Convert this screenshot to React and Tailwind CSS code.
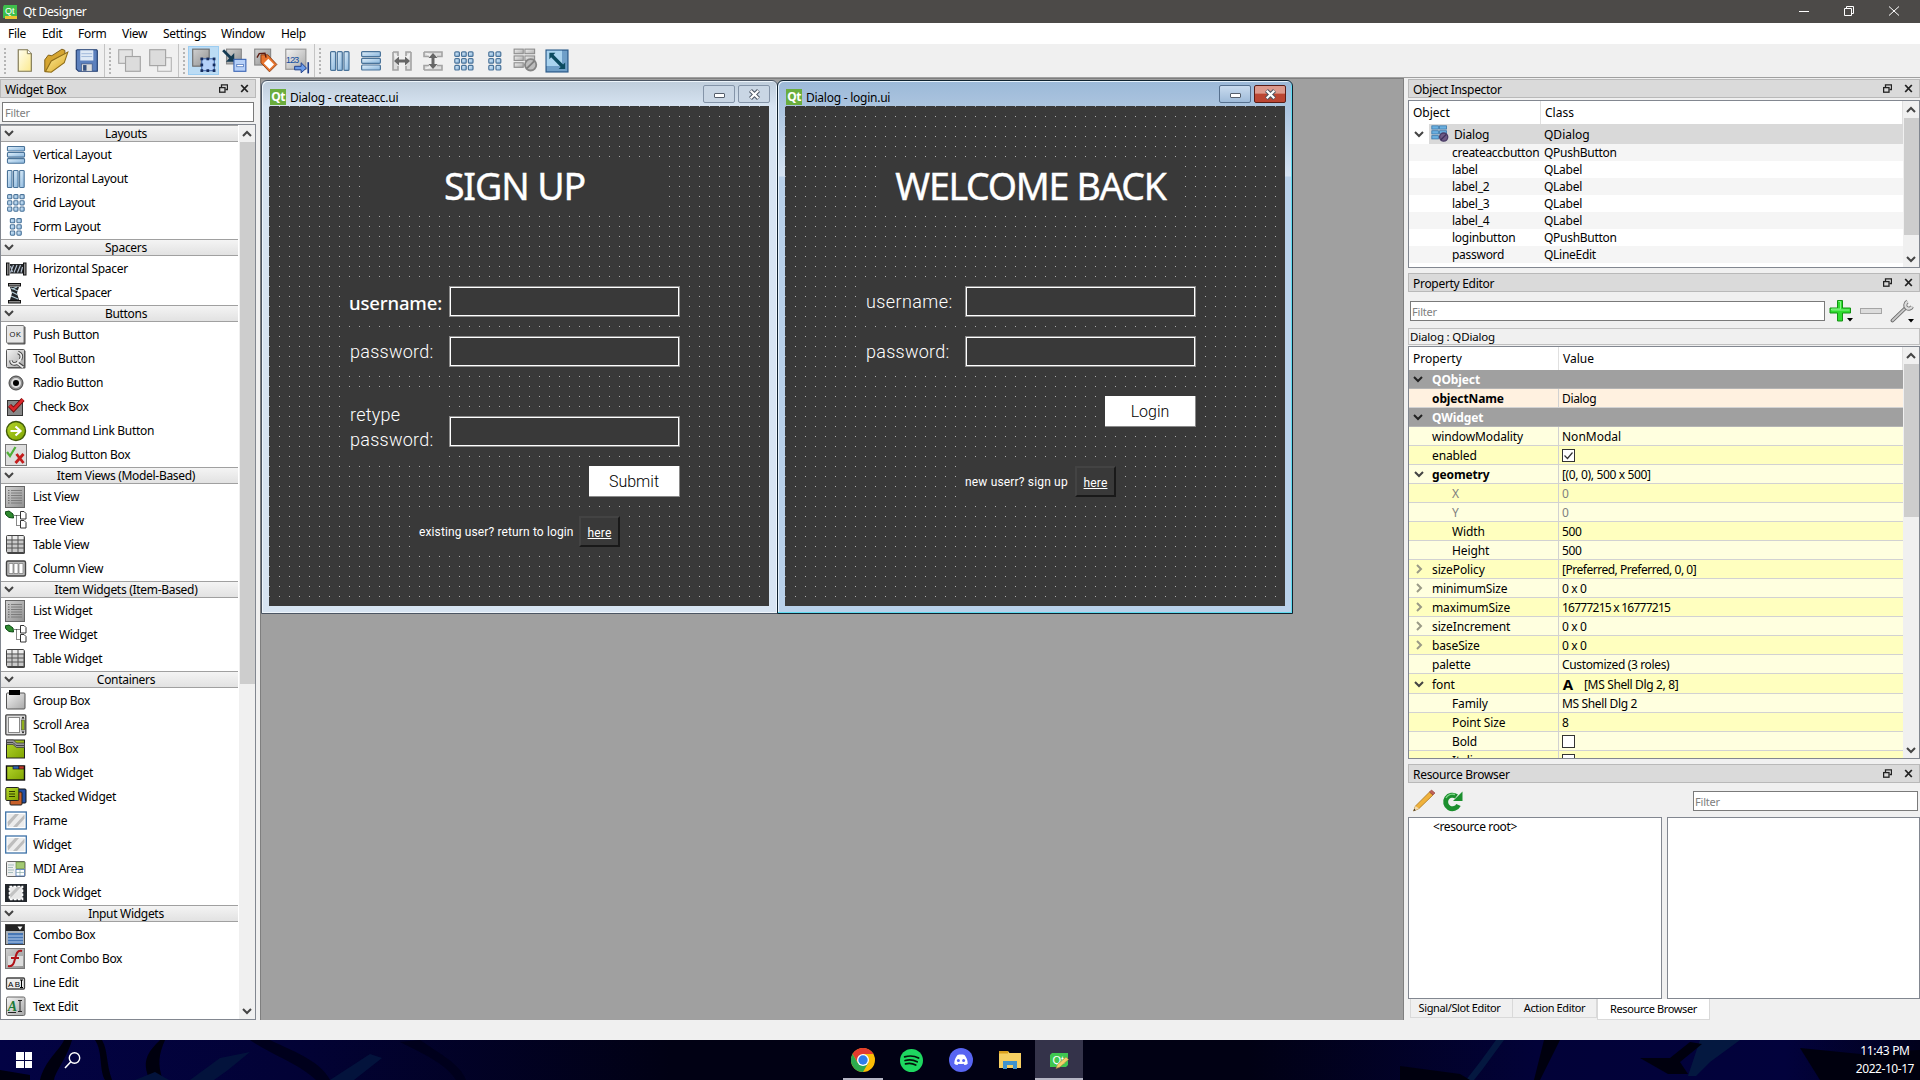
import React from "react";

/* ---------- shared gradients ---------- */
function Defs() {
  return (
    <svg width="0" height="0" className="absolute">
      <defs>
        <linearGradient id="blue" x1="0" y1="0" x2="1" y2="1">
          <stop offset="0" stopColor="#e3f1fb" />
          <stop offset="1" stopColor="#86b4dc" />
        </linearGradient>
        <linearGradient id="grey" x1="0" y1="0" x2="1" y2="1">
          <stop offset="0" stopColor="#f4f4f4" />
          <stop offset="1" stopColor="#a8a8a8" />
        </linearGradient>
        <linearGradient id="dark" x1="0" y1="0" x2="1" y2="1">
          <stop offset="0" stopColor="#d0d0d0" />
          <stop offset="1" stopColor="#909090" />
        </linearGradient>
        <linearGradient id="green" x1="0" y1="0" x2="1" y2="1">
          <stop offset="0" stopColor="#b4d52c" />
          <stop offset="1" stopColor="#7fa400" />
        </linearGradient>
        <linearGradient id="gold" x1="0" y1="0" x2="1" y2="1">
          <stop offset="0" stopColor="#fff0a0" />
          <stop offset="1" stopColor="#d9a420" />
        </linearGradient>
        <linearGradient id="paper" x1="0" y1="0" x2="1" y2="1">
          <stop offset="0" stopColor="#fffef0" />
          <stop offset="1" stopColor="#fbe98c" />
        </linearGradient>
      </defs>
    </svg>
  );
}

const Svg = ({ s = 22, children }) => (
  <svg width={s} height={s} viewBox="0 0 22 22" className="block shrink-0">
    {children}
  </svg>
);

/* ---------- layout icons ---------- */
const B = { fill: "url(#blue)", stroke: "#4a7399", strokeWidth: 1.2 };
const G = { fill: "url(#grey)", stroke: "#8f8f8f", strokeWidth: 1 };

const VBars = ({ s }) => (
  <Svg s={s}>{[1.6, 8.3, 15].map((y) => <rect key={y} x="1.6" y={y} width="18.8" height="5" rx="1" {...B} />)}</Svg>
);
const HBars = ({ s }) => (
  <Svg s={s}>{[1.6, 8.3, 15].map((x) => <rect key={x} x={x} y="1.6" width="5" height="18.8" rx="1" {...B} />)}</Svg>
);
const GridI = ({ s }) => (
  <Svg s={s}>
    {[1.8, 8.6, 15.4].map((y) => [1.8, 8.6, 15.4].map((x) => <rect key={x + "-" + y} x={x} y={y} width="4.6" height="4.6" rx="1" {...B} />))}
  </Svg>
);
const FormI = ({ s }) => (
  <Svg s={s}>
    {[1.8, 8.6, 15.4].map((y) => [4.8, 12].map((x) => <rect key={x + "-" + y} x={x} y={y} width="4.8" height="4.6" rx="1" {...B} />))}
  </Svg>
);
const HSplit = ({ s }) => (
  <Svg s={s}>
    <path d="M2 2h5v4M2 2v18h5v-4M20 2h-5v4M20 2v18h-5v-4" fill="#ddd" stroke="#a3a3a3" strokeWidth="1.600" />
    <path d="M3 11l5-4.500V9.500h6V6.500l5 4.500-5 4.500v-3H8v3z" fill="#666" />
  </Svg>
);
const VSplit = ({ s }) => (
  <Svg s={s}>
    <path d="M2 2v4.500h5M2 2h18v4.500h-5M2 20v-4.500h5M2 20h18v-4.500h-5" fill="#ddd" stroke="#a3a3a3" strokeWidth="1.600" />
    <path d="M11 3l4.500 5h-3v6h3L11 19l-4.500-5h3V8h-3z" fill="#666" />
  </Svg>
);
const BreakI = ({ s, blue }) => {
  const P = blue ? { fill: "#6bb0e0", stroke: "#3877ab", strokeWidth: 1 } : G;
  return (
    <Svg s={s}>
      <rect x="1" y="1" width="8" height="4" {...P} />
      <rect x="10.500" y="1" width="8.500" height="4" {...P} />
      <rect x="1" y="7" width="8" height="4" {...P} />
      <rect x="10.500" y="7" width="8.500" height="4" {...P} />
      <rect x="1" y="13" width="8" height="4" {...P} />
      <circle cx="15.500" cy="14.800" r="5" fill={blue ? "#6d5a85" : "#bdbdbd"} stroke={blue ? "#4a3c66" : "#858585"} strokeWidth="1.600" />
      <path d="M12.200 18l6.500-6.500" stroke={blue ? "#3b2f5a" : "#7e7e7e"} strokeWidth="1.600" />
    </Svg>
  );
};
const Adjust = ({ s }) => (
  <Svg s={s}>
    <rect x="1" y="1" width="20" height="20" fill="#6f9fc8" stroke="#2f5f8e" strokeWidth="1.200" />
    <rect x="1.600" y="1.600" width="14" height="14" fill="#a9d3ef" />
    <path d="M4 3.500h5.500L7.800 5.300l8.800 8.800 1.900-1.800v6h-6l1.900-1.900-8.800-8.800L4 9.300z" fill="#0b4a60" />
  </Svg>
);

/* ---------- toolbar icons ---------- */
const NewI = () => (
  <Svg s={25}>
    <path d="M5.500 1.500h8l3.500 3.500v15.500H5.500z" fill="url(#paper)" stroke="#7d7550" />
    <path d="M13.500 1.500V5H17" fill="#fff" stroke="#7d7550" strokeWidth=".8" />
  </Svg>
);
const OpenI = () => (
  <Svg s={26}>
    <path d="M1.500 20V10l3-4 3 .5L16 1l2.500 1v5L5 20z" fill="#d5a531" stroke="#7c5c14" strokeWidth=".8" />
    <path d="M2 20L7 11l14-7.500-3 9L7 20.500z" fill="url(#gold)" stroke="#8e6c18" strokeWidth=".9" />
  </Svg>
);
const SaveI = () => (
  <Svg s={25}>
    <path d="M3 1.500h17l.5 1v18H4l-2-2V2z" fill="#5c80bd" stroke="#203c70" />
    <rect x="5.500" y="2" width="11.500" height="9" fill="#dfe9f6" />
    <path d="M6.500 5h9.500M6.500 7.500h9.500" stroke="#9db5d8" strokeWidth=".8" />
    <rect x="6.500" y="14" width="9.500" height="6.500" fill="#dcdcdc" stroke="#3e5684" strokeWidth=".6" />
    <rect x="8" y="15" width="3" height="5" fill="#35507f" />
  </Svg>
);
const BackI = () => (
  <Svg s={25}>
    <rect x="1.500" y="1.500" width="12" height="12" fill="#e3e3e3" stroke="#a9a9a9" />
    <rect x="7.500" y="7.500" width="13" height="13" fill="#dcdcdc" stroke="#a4a4a4" />
  </Svg>
);
const FrontI = () => (
  <Svg s={25}>
    <rect x="8.500" y="8.500" width="12" height="12" fill="#f0f0f0" stroke="#b5b5b5" />
    <rect x="1.500" y="1.500" width="14" height="14" fill="#dcdcdc" stroke="#a4a4a4" />
  </Svg>
);
const EditW = () => (
  <Svg s={25}>
    <rect x="1.500" y="1" width="14.500" height="15" fill="url(#dark)" stroke="#6c6c6c" />
    <rect x="9.500" y="9.500" width="11" height="10.500" fill="#b5d0f8" stroke="#3b62a8" strokeWidth=".9" />
    {[[8.700, 8.700], [14, 8.700], [19.500, 8.700], [8.700, 14], [19.500, 14], [8.700, 19], [14, 19], [19.500, 19]].map(([x, y]) => (
      <rect key={x + "," + y} x={x - 0.400} y={y - 0.300} width="2.400" height="2.400" fill="#142a5c" />
    ))}
  </Svg>
);
const SigI = () => (
  <Svg s={25}>
    <rect x="4" y="1" width="13" height="13" fill="url(#dark)" stroke="#888" />
    <path d="M1 2l7 7" stroke="#143a52" strokeWidth="2.400" />
    <path d="M10.800 12V4.500L3.500 12z" fill="#143a52" />
    <rect x="10.500" y="10" width="10.500" height="10.500" fill="#b6d0f8" stroke="#3c66b4" />
    <rect x="13" y="14.500" width="6" height="2" fill="#fff" stroke="#3c66b4" strokeWidth=".6" />
  </Svg>
);
const BuddyI = () => (
  <Svg s={25}>
    <rect x="1.500" y="1" width="14" height="14" fill="url(#dark)" stroke="#888" />
    <path d="M7 6h6l8 8.500-6.500 6.500L7 13z" fill="#e8742e" stroke="#8a3c10" strokeWidth=".8" />
    <path d="M13.500 9.500l5 5-4 4-5-5z" fill="#fff" />
    <path d="M3.500 8.500l2-3.500 5-.5 1 4" fill="none" stroke="#5c1a10" strokeWidth="1.200" />
  </Svg>
);
const TabI = () => (
  <Svg s={26}>
    <rect x="1.500" y="1" width="17" height="17" fill="url(#grey)" stroke="#999" />
    <text x="1.500" y="13" fontSize="8" textLength="11.500" fill="#174f9e" fontFamily="Liberation Sans, sans-serif">123</text>
    <path d="M9 15.500h5.500V12.500l4.500 4.500-4.500 4V18.500H9z" fill="#6b9be8" stroke="#1d3c88" strokeWidth=".8" />
    <path d="M20.500 12v9.500" stroke="#1d3c88" strokeWidth="1.400" />
  </Svg>
);

/* ---------- widget box icons ---------- */
const HSpacer = () => (
  <Svg>
    <rect x="1.500" y="5" width="2.500" height="12" fill="#888" stroke="#111" />
    <rect x="18.500" y="5" width="2.500" height="12" fill="#888" stroke="#111" />
    <path d="M5 6h13v9.500H5z" fill="#232629" />
    <path d="M5.500 14.500L8.500 7M9 14.500L12 7M12.500 14.500L15.500 7M5.500 8l2 6M16 14.500L17.500 9" stroke="#b9c6d6" strokeWidth="1.100" />
  </Svg>
);
const VSpacer = () => (
  <Svg>
    <rect x="3.500" y="1.500" width="12" height="2.500" fill="#888" stroke="#111" />
    <rect x="3.500" y="18.500" width="12" height="2.500" fill="#888" stroke="#111" />
    <path d="M5 5h9l-2 6 2 7H5l2-7z" fill="#232629" />
    <path d="M6 6l7 3M7 10l6 3M6 14l7 3M12 5l-5 2" stroke="#b3cdd8" strokeWidth="1.100" />
  </Svg>
);
const PushI = () => (
  <Svg>
    <rect x="2.500" y="2.500" width="18" height="18" rx="1" fill="#555" />
    <rect x="1.500" y="1.500" width="17.500" height="17.500" rx="1" fill="#e6e6e6" stroke="#777" />
    <text x="4.500" y="13" fontSize="7.500" textLength="11.500" fill="#111" fontFamily="Liberation Sans, sans-serif">OK</text>
  </Svg>
);
const ToolI = () => (
  <Svg>
    <rect x="2.500" y="2.500" width="18" height="18" rx="1" fill="#555" />
    <rect x="1.500" y="1.500" width="18" height="18" rx="1" fill="url(#grey)" stroke="#555" />
    <path d="M6 12.500c0 3 3 4.500 6 2.500l6 4M13 4.500c3 1 4.500 3.500 2.500 7" fill="none" stroke="#444" strokeWidth="3.600" />
    <path d="M6 12.500c0 3 3 4.500 6 2.500l6 4.500M13 4.500c3 1 4.500 3.500 2.500 7l-3 3" fill="none" stroke="#ececec" strokeWidth="1.800" />
  </Svg>
);
const RadioI = () => (
  <Svg>
    <circle cx="11" cy="11" r="7" fill="#8d8d8d" stroke="#444" />
    <circle cx="11" cy="11" r="5" fill="#ddd" />
    <circle cx="11" cy="11" r="3" fill="#000" />
  </Svg>
);
const CheckI = () => (
  <Svg>
    <rect x="2.500" y="4.500" width="15" height="15" fill="#888" stroke="#333" />
    <path d="M4.500 9.500l4 4L18 3.500" fill="none" stroke="#6b0b0b" strokeWidth="4.400" />
    <path d="M4.500 9.500l4 4L18 3.500" fill="none" stroke="#d8262a" strokeWidth="2.800" />
  </Svg>
);
const CmdI = () => (
  <Svg>
    <circle cx="11" cy="11" r="9.500" fill="url(#green)" stroke="#3f5a08" strokeWidth="1.400" />
    <path d="M5.500 11h9M10.500 6.500l5 4.500-5 4.500" fill="none" stroke="#fff" strokeWidth="2.200" />
  </Svg>
);
const DlgBtnI = () => (
  <Svg>
    <rect x=".5" y=".5" width="21" height="21" fill="#dedede" stroke="#777" />
    <path d="M2 8l3 4 5.500-9" fill="none" stroke="#4fae36" strokeWidth="2.200" />
    <path d="M11.500 10l7 9M18.500 10l-8 9" stroke="#c41d1d" strokeWidth="2.800" />
  </Svg>
);
const ListI = () => (
  <Svg>
    <rect x=".5" y=".5" width="19" height="21" fill="url(#dark)" stroke="#666" />
    <path d="M6 4.500h11M6 7h11M6 9.500h11M6 12h11M6 14.500h11M6 17h11" stroke="#6e6e6e" strokeWidth=".8" />
    <path d="M3 4.500h1.500M3 7h1.500M3 9.500h1.500M3 12h1.500M3 14.500h1.500M3 17h1.500" stroke="#555" strokeWidth=".8" />
  </Svg>
);
const TreeI = () => (
  <Svg>
    <path d="M0 2l4-1 4 3 .5 4L4 7.500 1 5z" fill="#2f8a2f" stroke="#0b4a12" />
    <path d="M9.500 5.500h5M11.500 5.500v10h3" fill="none" stroke="#111" strokeDasharray="1 1" />
    <path d="M15.500 1.500h3.500l2 2V9h-5.500zM15.500 10.500h3.500l2 2V18h-5.500z" fill="#fff" stroke="#333" />
  </Svg>
);
const TableI = () => (
  <Svg>
    <rect x="2" y="2" width="18" height="18" rx="1.500" fill="#444" />
    <rect x="1.500" y="1.500" width="17.500" height="17" rx="1" fill="#c9c9c9" stroke="#444" />
    <rect x="2" y="2" width="16.500" height="3.500" fill="#eee" />
    <path d="M2 6h17M2 10h17M2 14h17M7 2v16M13 2v16" stroke="#555" />
  </Svg>
);
const ColumnI = () => (
  <Svg>
    <rect x="1.500" y="3" width="19" height="15" rx="1.500" fill="#bbb" stroke="#444" strokeWidth="1.400" />
    <path d="M4 5.500h4v10H4zM9 5.500h4v10H9zM14 5.500h4v10h-4z" fill="#fff" stroke="#777" strokeWidth=".7" />
  </Svg>
);
const GroupI = () => (
  <Svg>
    <rect x="1.500" y="3" width="18.500" height="16" rx="1" fill="url(#grey)" stroke="#555" />
    <rect x="4" y="0" width="11" height="5" fill="#000" />
  </Svg>
);
const ScrollI = () => (
  <Svg>
    <rect x=".8" y=".8" width="20" height="20" rx="1" fill="#ddd" stroke="#444" strokeWidth="1.300" />
    <rect x="3.500" y="3.500" width="11" height="15" fill="#fff" stroke="#888" />
    <rect x="16.500" y="6" width="3" height="10" fill="#8fae1c" stroke="#444" strokeWidth=".6" />
    <path d="M18 2.500l1.500 2h-3zM18 19.500l1.500-2h-3z" fill="#000" />
  </Svg>
);
const ToolBoxI = () => (
  <Svg>
    <rect x="1.500" y="2" width="18" height="18" fill="url(#green)" stroke="#222" />
    <path d="M1.500 2h7l3 3h8v4.500h-8L8 6.500H1.500z" fill="#999" stroke="#333" strokeWidth=".7" />
    <path d="M1.500 4.500h6.500l3 3h8.500" fill="none" stroke="#444" strokeWidth="1" />
  </Svg>
);
const TabWI = () => (
  <Svg>
    <rect x="1.500" y="4" width="18" height="14" fill="url(#green)" stroke="#111" strokeWidth="1.400" />
    <rect x="8" y="4" width="6" height="3" fill="#2f62b0" stroke="#111" strokeWidth=".6" />
    <rect x="14" y="4" width="5" height="3" fill="#c0392b" stroke="#111" strokeWidth=".6" />
  </Svg>
);
const StackI = () => (
  <Svg>
    <rect x="10" y="3" width="11" height="14" rx="1" fill="#2450a5" stroke="#111" />
    <rect x="5" y="6" width="12" height="13" rx="1" fill="#c8602a" stroke="#222" />
    <rect x=".8" y="1.500" width="13" height="13" rx="1" fill="url(#green)" stroke="#222" />
    <path d="M4 5.500h6M4 8h6M4 10.500h6" stroke="#2d3a00" />
  </Svg>
);
const FrameI = () => (
  <Svg>
    <rect x=".7" y="2" width="20.600" height="17" fill="#fff" stroke="#3d72a8" strokeWidth="1.300" />
    <rect x="2.500" y="4" width="17" height="13" fill="#ececec" />
    <path d="M2.500 12L10 4h4L3 16.500zM8 17L19.500 4.500v4L12 17z" fill="#bdbdbd" />
  </Svg>
);
const MdiI = () => (
  <Svg>
    <rect x="1.500" y="3.500" width="18.500" height="15" rx="1" fill="#eee" stroke="#666" />
    <rect x="11" y="4" width="8.500" height="6.500" fill="#a3c973" stroke="#5b8030" strokeWidth=".6" />
    <rect x="11" y="11.500" width="8.500" height="6.500" fill="#fff" stroke="#4973b5" strokeWidth=".8" />
    <path d="M3 7h6M3 9.500h5M3 12h6M3 14.500h5M11 14.500h8.500M15 11.500V18" stroke="#8aa" strokeWidth=".7" />
  </Svg>
);
const DockI = () => (
  <Svg>
    <rect x="0" y="2" width="22" height="18" fill="#23272c" />
    <rect x="4.500" y="4.500" width="13" height="13" fill="#e8e8e8" stroke="#fff" strokeDasharray="2.500 1.500" strokeWidth="1.600" />
    <path d="M5 12l7-7h4L5.500 16z" fill="#c2c2c2" />
  </Svg>
);
const ComboI = () => (
  <Svg>
    <rect x=".5" y=".5" width="19" height="20" fill="#a8b0b8" stroke="#444" />
    <rect x="1" y="1" width="18" height="6" fill="#222" />
    <path d="M12.500 2.500h5L15 6z" fill="#fff" />
    <rect x="3" y="9" width="15" height="11" fill="#4777b5" />
    <path d="M3 12h15M3 15h15M3 18h15" stroke="#b9d0ee" />
  </Svg>
);
const FontCI = () => (
  <Svg>
    <rect x=".5" y=".5" width="19" height="20" fill="url(#dark)" stroke="#777" />
    <rect x="3" y="8" width="15" height="10" fill="#dcdcdc" />
    <path d="M17 3c-5-1.500-6 4-7 8s-2 8-7 7M6 10h8" fill="none" stroke="#b01218" strokeWidth="2" />
  </Svg>
);
const LineEI = () => (
  <Svg>
    <rect x="1.500" y="6" width="18" height="11" rx="1" fill="#ededed" stroke="#444" strokeWidth="1.300" />
    <text x="3" y="14.500" fontSize="8" textLength="12" fill="#000" fontFamily="Liberation Sans, sans-serif">AB</text>
    <path d="M16.500 8v7.500M15 8h3M15 15.500h3" stroke="#000" />
  </Svg>
);
const TextEI = () => (
  <Svg>
    <rect x="1.500" y="1" width="18.500" height="18.500" rx="1.500" fill="url(#grey)" stroke="#666" />
    <text x="2.800" y="14.500" fontSize="14" fill="#1d7a38" fontStyle="italic" fontWeight="bold" fontFamily="Liberation Serif, serif">A</text>
    <path d="M3 16.500h8M15 4.500v11M13 4.500h4M13 15.500h4" stroke="#222" />
  </Svg>
);

const GROUPS = [
  ["Layouts", [["Vertical Layout", VBars], ["Horizontal Layout", HBars], ["Grid Layout", GridI], ["Form Layout", FormI]]],
  ["Spacers", [["Horizontal Spacer", HSpacer], ["Vertical Spacer", VSpacer]]],
  ["Buttons", [["Push Button", PushI], ["Tool Button", ToolI], ["Radio Button", RadioI], ["Check Box", CheckI], ["Command Link Button", CmdI], ["Dialog Button Box", DlgBtnI]]],
  ["Item Views (Model-Based)", [["List View", ListI], ["Tree View", TreeI], ["Table View", TableI], ["Column View", ColumnI]]],
  ["Item Widgets (Item-Based)", [["List Widget", ListI], ["Tree Widget", TreeI], ["Table Widget", TableI]]],
  ["Containers", [["Group Box", GroupI], ["Scroll Area", ScrollI], ["Tool Box", ToolBoxI], ["Tab Widget", TabWI], ["Stacked Widget", StackI], ["Frame", FrameI], ["Widget", FrameI], ["MDI Area", MdiI], ["Dock Widget", DockI]]],
  ["Input Widgets", [["Combo Box", ComboI], ["Font Combo Box", FontCI], ["Line Edit", LineEI], ["Text Edit", TextEI]]],
];

const Chevron = ({ dir = "down", color = "#444", w = 2 }) => {
  const d = { down: "M1 3l4 4 4-4", up: "M1 7l4-4 4 4", right: "M3 1l4 4-4 4" }[dir];
  return (
    <svg width="10" height="10" viewBox="0 0 10 10" className="block shrink-0">
      <path d={d} fill="none" stroke={color} strokeWidth={w} />
    </svg>
  );
};

function DockTitle({ children }) {
  return (
    <div className="flex h-[19px] shrink-0 items-center border border-[#b9b9b9] bg-[#dadada] pl-1 pr-[6px]">
      <span className="grow pt-[3px] text-[12px] leading-[16px] tracking-[-0.3px]">{children}</span>
      <svg width="9" height="9" viewBox="0 0 9 9" className="mr-3">
        <path d="M2.500 3V.8h6v4.700H6.500" fill="none" stroke="#222" strokeWidth="1.300" />
        <rect x=".6" y="3.600" width="5.400" height="4.600" fill="none" stroke="#222" strokeWidth="1.300" />
      </svg>
      <svg width="9" height="9" viewBox="0 0 9 9">
        <path d="M1.200 1l6.600 7M7.800 1l-6.600 7" stroke="#222" strokeWidth="1.800" />
      </svg>
    </div>
  );
}

/* The thumb's height is given by its Tailwind class. */
function ScrollBar({ thumb }) {
  return (
    <div className="flex w-[16px] shrink-0 flex-col items-center bg-[#f0f0f0]">
      <div className="flex h-[17px] items-center"><Chevron dir="up" /></div>
      <div className={"w-[15px] bg-[#cdcdcd] " + thumb} />
      <div className="grow" />
      <div className="flex h-[17px] items-center"><Chevron /></div>
    </div>
  );
}

const isLayoutIcon = (Icon) => Icon === VBars || Icon === HBars || Icon === GridI || Icon === FormI;

function WidgetBox() {
  return (
    <div className="flex w-[256px] shrink-0 flex-col pt-px">
      <DockTitle>Widget Box</DockTitle>
      <div className="ml-[2px] mr-[2px] mt-[4px] flex h-[20px] items-center border border-[#7a7a7a] bg-white pl-[2px] text-[11px] tracking-[-0.2px] text-[#808080]">
        <span className="pt-[2px]">Filter</span>
      </div>
      <div className="mt-[2px] flex h-[896px] border border-[#828790] bg-white">
        <div className="flex w-[237px] flex-col">
          {GROUPS.map(([name, items]) => (
            <React.Fragment key={name}>
              <div className="mb-px flex h-[17px] items-center border-y border-[#a0a0a0] bg-linear-to-b from-[#f4f4f4] to-[#e2e2e2] pl-[3px]">
                <div className="-mt-px"><Chevron /></div>
                <span className="grow text-center text-[12px] leading-[14px] tracking-[-0.3px]">{name}</span>
              </div>
              {items.map(([label, Icon]) => (
                <div key={label} className="flex h-[24px] items-center">
                  <div className={isLayoutIcon(Icon) ? "w-[27px] shrink-0 pl-[5px]" : "w-[27px] shrink-0 pl-[4px]"}><Icon s={20} /></div>
                  <span className="ml-[5px] text-[12px] tracking-[-0.3px]">{label}</span>
                </div>
              ))}
            </React.Fragment>
          ))}
        </div>
        <div className="grow" />
        <ScrollBar thumb="h-[542px]" />
      </div>
    </div>
  );
}

/* ---------- toolbar ---------- */
const Handle = () => (
  <div className="flex w-[9px] shrink-0 flex-col items-center gap-[2px]">
    {[0, 1, 2, 3, 4, 5, 6].map((i) => <div key={i} className="h-[2px] w-[2px] bg-[#b5b5b5]" />)}
  </div>
);
const Btn = ({ children, on }) => (
  <div className={"flex h-[29px] w-[31px] shrink-0 items-center justify-center " + (on ? "border border-[#9ccdf2] bg-[#bcdcf4]" : "")}>{children}</div>
);

function ToolBar() {
  return (
    <div className="flex h-[34px] shrink-0 items-center border-b border-[#a0a0a0] bg-[#f0f0f0]">
      <div className="flex h-full w-[105px] items-center border-r border-[#c4c4c4]">
        <Handle />
        <Btn><NewI /></Btn><Btn><OpenI /></Btn><Btn><SaveI /></Btn>
      </div>
      <div className="flex h-full w-[74px] items-center border-r border-[#c4c4c4]">
        <Handle />
        <Btn><BackI /></Btn><Btn><FrontI /></Btn>
      </div>
      <div className="flex h-full w-[136px] items-center border-r border-[#c4c4c4]">
        <Handle />
        <Btn on><EditW /></Btn><Btn><SigI /></Btn><Btn><BuddyI /></Btn><Btn><TabI /></Btn>
      </div>
      <div className="flex items-center">
        <Handle />
        <Btn><HBars s={22} /></Btn><Btn><VBars s={22} /></Btn><Btn><HSplit s={22} /></Btn><Btn><VSplit s={22} /></Btn>
        <Btn><GridI s={22} /></Btn><Btn><FormI s={22} /></Btn><Btn><BreakI s={25} /></Btn><Btn><Adjust s={24} /></Btn>
      </div>
    </div>
  );
}

/* ---------- MDI windows ---------- */
const QtBadge = () => (
  <div className="flex h-4 w-4 shrink-0 items-center justify-center bg-[#6aad3d] text-[12px] leading-none font-bold tracking-[-0.5px] text-white">Qt</div>
);

function FormWindow({ title, active, place, children }) {
  return (
    <div
      className={
        "absolute top-[1px] h-[534px] rounded-t-[6px] border px-[7px] " + place +
        (active
          ? " border-[#10222f] bg-[#b9d1ea] bg-linear-to-b from-[#9cb9d8] from-0% via-[#d5e3f2] via-[95px] to-[#b9d1ea] to-[96px] shadow-[inset_-1px_-1px_0_#5fdcf0,inset_1px_1px_0_#e6f2fc]"
          : " border-[#4b5563] bg-[#d7e4f2] bg-linear-to-b from-[#bfcddb] from-0% to-[#d7e4f2] to-[26px] shadow-[inset_-1px_-1px_0_#eef5fb,inset_1px_1px_0_#eef5fb]")
      }
    >
      <div className="flex h-[25px] w-[501px] items-start">
        <div className="ml-px mt-[8px]"><QtBadge /></div>
        <span className="ml-[4px] mt-[9px] grow text-[12px] leading-[16px] tracking-[-0.25px]">{title}</span>
        <div className={"mt-[4px] mr-[3px] flex h-[18px] w-[32px] items-center justify-center rounded-[2px] border " + (active ? "border-[#56708e] bg-linear-to-b from-[#c9dbee] to-[#9fbbd9]" : "border-[#8494a8] bg-[#c9d6e4]")}>
          <div className="mt-[3px] h-[5px] w-[11px] rounded-[1px] border border-[#555e6b] bg-white" />
        </div>
        <div className={"mt-[4px] flex h-[18px] w-[32px] items-center justify-center rounded-[2px] border " + (active ? "border-[#5a1d16] bg-linear-to-b from-[#dd9a8d] from-45% to-[#bb4633] to-50%" : "border-[#8494a8] bg-[#c9d6e4]")}>
          <svg width="13" height="11" viewBox="0 0 13 11">
            <path d="M2.500 1.500l8 8M10.500 1.500l-8 8" stroke="#4d5663" strokeWidth="4.200" />
            <path d="M2.700 1.700l7.600 7.600M10.300 1.700l-7.600 7.600" stroke="#fff" strokeWidth="2.200" />
          </svg>
        </div>
      </div>
      <div className="relative h-[500px] w-[500px] overflow-hidden bg-[#393939] bg-[linear-gradient(90deg,transparent_1px,#393939_1px),linear-gradient(180deg,#a9a9a9_1px,transparent_1px)] bg-[size:10px_10px]">
        {children}
      </div>
    </div>
  );
}

const Cover = ({ at }) => <div className={"absolute bg-[#393939] " + at} />;
const Field = ({ at }) => <div className={"absolute left-[180px] h-[31px] w-[231px] border border-[#8c8c8c] bg-[#393939] p-0 " + at}><div className="h-full w-full border border-white" /></div>;
const thin = "absolute font-['Roboto',sans-serif] text-[18px] leading-[25px] font-light text-white ";
const heading = "absolute left-[91px] top-[55px] w-[309px] text-center text-[37.5px] leading-[50px] text-white [-webkit-text-stroke:0.4px_white] ";
const Here = ({ at }) => (
  <div className={"absolute flex h-[31px] w-[41px] items-center justify-center border-2 border-t-[#434343] border-l-[#434343] border-r-[#191919] border-b-[#191919] bg-[#393939] pt-[2px] font-['Roboto',sans-serif] text-[12px] text-white underline underline-offset-1 tracking-[0.15px] " + at}>here</div>
);
const WhiteBtn = ({ at, children }) => (
  <div className={"absolute flex h-[31px] w-[91px] items-center justify-center border-r border-b border-[#8a8a8a] bg-white pt-[2px] font-['Roboto',sans-serif] text-[16px] font-light text-black " + at}>{children}</div>
);

function Mdi() {
  return (
    <div className="relative ml-[4px] w-[1144px] shrink-0 overflow-hidden border-t border-r border-l border-[#7f7f7f] bg-[#a0a0a0]">
      <FormWindow title="Dialog - createacc.ui" place="left-0 w-[517px]">
        <Cover at="left-[92px] top-[56px] h-[50px] w-[304px]" />
        <Cover at="left-[75px] top-[175px] h-[40px] w-[340px]" />
        <Cover at="left-[75px] top-[226px] h-[40px] w-[340px]" />
        <Cover at="left-[75px] top-[285px] h-[71px] w-[104px]" />
        <Cover at="left-[180px] top-[305px] h-[41px] w-[235px]" />
        <Cover at="left-[146px] top-[405px] h-[40px] w-[209px]" />
        <Cover at="left-[0px] top-[495px] h-[5px] w-[500px]" />
        <div className={heading + "tracking-[-1.1px]"}>SIGN UP</div>
        <div className="absolute left-[80px] top-[184px] text-[18.500px] leading-[26px] font-medium tracking-[-0.150px] text-white">username:</div>
        <div className={thin + "left-[81px] top-[233px] tracking-[0.250px]"}>password:</div>
        <div className={thin + "left-[81px] top-[296px] w-[90px] tracking-[0.250px]"}>retype password:</div>
        <Field at="top-[180px]" />
        <Field at="top-[230px]" />
        <Field at="top-[310px]" />
        <WhiteBtn at="left-[320px] top-[360px]">Submit</WhiteBtn>
        <div className="absolute left-[150px] top-[418px] font-['Roboto',sans-serif] text-[12px] leading-[16px] tracking-[0.130px] text-white">existing user? return to login</div>
        <Here at="left-[310px] top-[410px]" />
      </FormWindow>
      <FormWindow active title="Dialog - login.ui" place="left-[516px] w-[516px]">
        <Cover at="left-[92px] top-[56px] h-[50px] w-[304px]" />
        <Cover at="left-[75px] top-[175px] h-[40px] w-[340px]" />
        <Cover at="left-[75px] top-[226px] h-[40px] w-[340px]" />
        <Cover at="left-[175px] top-[355px] h-[40px] w-[160px]" />
        <Cover at="left-[0px] top-[495px] h-[5px] w-[500px]" />
        <div className={heading + "tracking-[-1.300px]"}>WELCOME BACK</div>
        <div className={thin + "left-[81px] top-[183px] tracking-[0.400px]"}>username:</div>
        <div className={thin + "left-[81px] top-[233px] tracking-[0.250px]"}>password:</div>
        <Field at="top-[180px]" />
        <Field at="top-[230px]" />
        <WhiteBtn at="left-[320px] top-[290px]">Login</WhiteBtn>
        <div className="absolute left-[180px] top-[368px] font-['Roboto',sans-serif] text-[12px] leading-[16px] tracking-[0.170px] text-white">new userr? sign up</div>
        <Here at="left-[290px] top-[360px]" />
      </FormWindow>
    </div>
  );
}

/* ---------- right column ---------- */
const OBJECTS = [
  ["createaccbutton", "QPushButton"], ["label", "QLabel"], ["label_2", "QLabel"], ["label_3", "QLabel"],
  ["label_4", "QLabel"], ["loginbutton", "QPushButton"], ["password", "QLineEdit"],
];

function ObjectInspector() {
  return (
    <>
      <DockTitle>Object Inspector</DockTitle>
      <div className="mt-[2px] flex h-[168px] shrink-0 border border-[#828790] bg-white text-[12px]">
        <div className="flex w-[494px] flex-col">
          <div className="flex h-[23px] shrink-0 items-center border-r border-[#e0e0e0]">
            <span className="w-[131px] pl-[4px]">Object</span>
            <span className="flex h-full items-center border-l border-[#e0e0e0] pl-[4px]">Class</span>
          </div>
          <div className="flex h-[20px] shrink-0 items-center">
            <div className="flex w-[20px] justify-center"><Chevron /></div>
            <div className="flex h-full grow items-center bg-[#d9d9d9] pl-[2px]">
              <BreakI blue s={18} />
              <span className="w-[90px] pl-[5px] pt-[2px] tracking-[-0.200px]">Dialog</span>
              <span className="pl-[5px] pt-[2px]">QDialog</span>
            </div>
          </div>
          {OBJECTS.map(([n, c], i) => (
            <div key={n} className={"flex h-[17px] shrink-0 items-center pt-[1px] leading-[16px] tracking-[-0.280px] " + (i % 2 ? "bg-white" : "bg-[#f5f5f5]")}>
              <span className="w-[135px] pl-[43px]">{n}</span>
              <span>{c}</span>
            </div>
          ))}
        </div>
        <ScrollBar thumb="h-[117px]" />
      </div>
    </>
  );
}

const CheckBox = ({ on }) => (
  <svg width="13" height="13" viewBox="0 0 13 13" className="block">
    <rect x=".5" y=".5" width="12" height="12" fill="#fff" stroke="#333" />
    {on && <path d="M2.500 6.500l3 3 5-6" fill="none" stroke="#333" strokeWidth="1.200" />}
  </svg>
);

/* kind: h = class header, o = object name; t = letter spacing of the value */
const PROPS = [
  { n: "QObject", kind: "h" },
  { n: "objectName", v: "Dialog", kind: "o", bold: true },
  { n: "QWidget", kind: "h" },
  { n: "windowModality", v: "NonModal", t: "tracking-normal" },
  { n: "enabled", v: <CheckBox on /> },
  { n: "geometry", v: "[(0, 0), 500 x 500]", bold: true, arrow: "down" },
  { n: "X", v: "0", sub: true, off: true },
  { n: "Y", v: "0", sub: true, off: true },
  { n: "Width", v: "500", sub: true },
  { n: "Height", v: "500", sub: true },
  { n: "sizePolicy", v: "[Preferred, Preferred, 0, 0]", arrow: "right", t: "tracking-[-0.480px]" },
  { n: "minimumSize", v: "0 x 0", arrow: "right" },
  { n: "maximumSize", v: "16777215 x 16777215", arrow: "right", t: "tracking-[-0.750px]" },
  { n: "sizeIncrement", v: "0 x 0", arrow: "right" },
  { n: "baseSize", v: "0 x 0", arrow: "right" },
  { n: "palette", v: "Customized (3 roles)" },
  { n: "font", v: "[MS Shell Dlg 2, 8]", arrow: "down", font: true },
  { n: "Family", v: "MS Shell Dlg 2", sub: true },
  { n: "Point Size", v: "8", sub: true },
  { n: "Bold", v: <CheckBox />, sub: true },
  { n: "Italic", v: <CheckBox />, sub: true },
];

function PropertyRow({ p, i }) {
  if (p.kind === "h")
    return (
      <div className="flex h-[19px] shrink-0 items-center border-b border-[#b4b4b4] bg-[#a0a0a0]">
        <div className="flex w-[23px] justify-center pr-[5px]"><Chevron color="#222" /></div>
        <span className="pt-[2px] font-bold tracking-[-0.100px] text-white">{p.n}</span>
      </div>
    );
  const bg = p.kind === "o" ? "bg-[#fff1e0]" : i % 2 ? "bg-[#ffffdf]" : "bg-[#ffffbf]";
  return (
    <div className={"flex shrink-0 items-center border-b border-[#d2d2d2] " + bg + (p.font ? " h-[20px]" : " h-[19px]") + (p.off ? " text-[#808080]" : "")}>
      <div className="flex w-[23px] justify-center pr-[3px]">
        {p.arrow && <Chevron dir={p.arrow} color={p.arrow === "right" ? "#9a9a86" : "#444"} />}
      </div>
      <span className={"pt-[2px] leading-[16px] tracking-[-0.120px] " + (p.sub ? "w-[126px] pl-[20px]" : "w-[126px]") + (p.bold ? " font-bold" : "")}>{p.n}</span>
      <div className="flex h-full items-center border-l border-[#d2d2d2] pl-[3px]">
        {p.font && <span className="mr-[10px] w-[12px] text-center text-[15px] font-bold leading-[16px]">A</span>}
        <span className={(typeof p.v === "string" ? "pt-[2px] leading-[16px] " : "") + (p.t || "tracking-[-0.350px]")}>{p.v}</span>
      </div>
    </div>
  );
}

function PropertyEditor() {
  return (
    <>
      <div className="h-[5px] shrink-0" />
      <DockTitle>Property Editor</DockTitle>
      <div className="flex h-[36px] shrink-0 items-center pl-[2px] pt-[2px]">
        <div className="flex h-[20px] w-[415px] items-center border border-[#7a7a7a] bg-white pl-[1px] text-[11px] tracking-[-0.2px] text-[#808080]"><span className="pt-[2px]">Filter</span></div>
        <svg width="26" height="24" viewBox="0 0 26 24" className="ml-[4px]">
          <path d="M8.500 1.500h5v7.500h8v5h-8v8h-5v-8h-7.500v-5h7.500z" fill="#2fdc2f" stroke="#129312" />
          <path d="M9.500 2.500h2v7.500h-9v1h18" fill="none" stroke="#8bf58b" />
          <path d="M18 19h6l-3 3.500z" fill="#000" />
        </svg>
        <div className="ml-[5px] h-[6px] w-[22px] border border-[#a5a5a5] bg-[#dcdcdc]" />
        <svg width="25" height="25" viewBox="0 0 25 25" className="ml-[8px]">
          <path d="M2.500 21.500L15.500 9" stroke="#6a6a6a" strokeWidth="3.800" strokeLinecap="round" />
          <path d="M2.500 21.500L15.500 9" stroke="#c8c8c8" strokeWidth="1.800" strokeLinecap="round" />
          <path d="M17.500 2.500c-2.500 1.500-3 5-.8 6.500 2 1.400 4.300.5 5.300-1.500" fill="none" stroke="#777" strokeWidth="4" />
          <path d="M17.500 2.500c-2.500 1.500-3 5-.8 6.500 2 1.400 4.300.5 5.300-1.500" fill="none" stroke="#ddd" strokeWidth="2.200" />
          <path d="M18 20h6l-3 3.500z" fill="#000" />
        </svg>
      </div>
      <div className="flex h-[17px] shrink-0 items-center border border-[#c0c0c0] pl-[1px] pt-[1px] text-[11.500px] leading-[14px] tracking-[-0.170px]">Dialog : QDialog</div>
      <div className="mt-px flex h-[413px] shrink-0 overflow-hidden border border-[#828790] bg-white text-[12px]">
        <div className="flex w-[494px] flex-col overflow-hidden">
          <div className="flex h-[23px] shrink-0 items-center border-r border-[#e0e0e0]">
            <span className="w-[149px] pl-[4px]">Property</span>
            <span className="flex h-full items-center border-l border-[#e0e0e0] pl-[4px]">Value</span>
          </div>
          {PROPS.map((p, i) => <PropertyRow key={p.n} p={p} i={i} />)}
        </div>
        <ScrollBar thumb="h-[153px]" />
      </div>
    </>
  );
}

function ResourceBrowser() {
  return (
    <>
      <div className="h-[5px] shrink-0" />
      <DockTitle>Resource Browser</DockTitle>
      <div className="flex h-[34px] shrink-0 items-center pl-[4px] pr-[2px] pt-[2px]">
        <svg width="24" height="24" viewBox="0 0 24 24">
          <path d="M1.500 22l2-5L17.500 3l3.500 3L7 19.500z" fill="#f0b23c" stroke="#a8741c" strokeWidth=".8" />
          <path d="M17.500 3l2-2 3.500 3-2 2z" fill="#c0625a" stroke="#8e3a34" strokeWidth=".6" />
          <path d="M1.500 22l2-5 3.500 2.500z" fill="#f3dcb0" />
          <path d="M1.500 22l.8-2.200 1.400 1.400z" fill="#222" />
        </svg>
        <svg width="24" height="24" viewBox="0 0 24 24" className="ml-[5px]">
          <path d="M17.500 16a6.800 6.800 0 1 1-2-8.500" fill="none" stroke="#1c8f2e" strokeWidth="5" />
          <path d="M21.500 2.500v9.500H12z" fill="#1c8f2e" />
          <path d="M5 9a7.500 7.500 0 0 1 9-3.500" fill="none" stroke="#7fd68a" strokeWidth="1.400" />
        </svg>
        <div className="grow" />
        <div className="flex h-[20px] w-[225px] items-center border border-[#7a7a7a] bg-white pl-[1px] text-[11px] tracking-[-0.2px] text-[#808080]"><span className="pt-[2px]">Filter</span></div>
      </div>
      <div className="flex h-[182px] shrink-0 gap-[5px]">
        <div className="w-[254px] border border-[#828790] bg-white pl-[24px] text-[12px] leading-[18px] tracking-[-0.380px]">&lt;resource root&gt;</div>
        <div className="grow border border-[#828790] bg-white" />
      </div>
      <div className="flex shrink-0 items-start pl-[2px] text-[11px] tracking-[-0.380px]">
        <div className="flex h-[19px] w-[103px] items-center justify-center border border-t-0 border-[#d9d9d9] pr-[4px]">Signal/Slot Editor</div>
        <div className="flex h-[19px] w-[84px] items-center justify-center border border-t-0 border-l-0 border-[#d9d9d9]">Action Editor</div>
        <div className="flex h-[21px] w-[113px] items-center justify-center border border-t-0 border-[#d9d9d9] bg-white">Resource Browser</div>
      </div>
    </>
  );
}

/* ---------- taskbar ---------- */
function TaskBar() {
  return (
    <div className="relative flex h-[40px] shrink-0 items-center bg-[#00000f] text-white">
      <svg width="1920" height="40" viewBox="0 0 1920 40" preserveAspectRatio="none" className="absolute inset-0">
        <defs>
          <linearGradient id="tb" x1="0" x2="1" y1="0" y2="0">
            <stop offset="0" stopColor="#030344" />
            <stop offset=".15" stopColor="#020236" />
            <stop offset=".35" stopColor="#010114" />
            <stop offset=".65" stopColor="#010114" />
            <stop offset=".8" stopColor="#020238" />
            <stop offset=".93" stopColor="#02023c" />
            <stop offset="1" stopColor="#01011c" />
          </linearGradient>
        </defs>
        <rect width="1920" height="40" fill="url(#tb)" />
        <path d="M40 40C45 20 60 10 64 0h8C66 20 56 30 54 40zM95 0c8 12 4 30 10 40h7C106 24 108 10 102 0zM150 40C140 20 150 10 160 0h5c-6 14-8 24-2 40zM0 30l30 5v5H0z" fill="#00000e" />
        <path d="M190 40l30-22 30-6-22 18 -14 10zM135 40l20-8 14 8zM330 40l40-26 12 4-28 22z" fill="#03133c" />
        <path d="M270 0c20 10 50 20 60 40h-14C300 24 270 14 250 0zM420 0c20 14 40 24 46 40h-10C446 24 424 14 400 2z" fill="#00001c" />
        <path d="M1480 22l16-22h8l-22 30-8 10h-8zM1700 0h40l-30 22-14 14h-8z" fill="#041840" />
        <path d="M1400 26l60 8 10 6h-70zM1640 18l30 0 20-16 12 2-22 18 8 12h-20zM1560 0l-20 40h-6l10-40zM1800 8l60 6 60-4v30h-100z" fill="#00000e" />
      </svg>
      <div className="relative ml-[16px] grid h-4 w-4 grid-cols-2 gap-px">
        <div className="bg-white" /><div className="bg-white" /><div className="bg-white" /><div className="bg-white" />
      </div>
      <svg width="17" height="17" viewBox="0 0 17 17" className="relative ml-[32px]">
        <circle cx="10.500" cy="6" r="5.200" fill="none" stroke="#fff" strokeWidth="1.400" />
        <path d="M6.800 9.700L1 16" stroke="#fff" strokeWidth="1.500" />
      </svg>
      <div className="relative ml-[758px] flex h-full">
        <div className="flex h-full w-[48px] flex-col items-center justify-between">
          <div className="h-[2px]" />
          <svg width="24" height="24" viewBox="0 0 24 24">
            <circle cx="12" cy="12" r="12" fill="#fbbc05" />
            <path d="M12 6h10.400A12 12 0 0 0 1.600 6L7 15z" fill="#e33b2e" />
            <path d="M1.600 6A12 12 0 0 0 12 24l5.200-9-10.400 0z" fill="#2da94f" />
            <circle cx="12" cy="12" r="6" fill="#fff" />
            <circle cx="12" cy="12" r="4.700" fill="#2f7de9" />
          </svg>
          <div className="h-[2px] w-[40px] bg-[#b5b5c4]" />
        </div>
        <div className="flex h-full w-[49px] items-center justify-center">
          <svg width="23" height="23" viewBox="0 0 24 24">
            <circle cx="12" cy="12" r="12" fill="#1ed760" />
            <path d="M4.800 8.200c5-1.400 10.500-1 14.600 1.300M5.300 12c4.400-1.200 8.800-.7 12.600 1.300M5.800 15.600c3.700-.9 7.300-.6 10.600 1.200" fill="none" stroke="#04120a" strokeWidth="1.800" strokeLinecap="round" />
          </svg>
        </div>
        <div className="flex h-full w-[49px] items-center justify-center">
          <svg width="24" height="24" viewBox="0 0 24 24">
            <circle cx="12" cy="12" r="12" fill="#5865f2" />
            <path d="M8.500 7c2.300-.6 4.700-.6 7 0 2 2.500 3.300 5.500 3.200 8.700-1 .8-2 1.200-3.200 1.400l-.9-1.400c-1.700.4-3.500.4-5.200 0l-.9 1.400c-1.200-.2-2.200-.6-3.200-1.400C5.200 12.500 6.500 9.500 8.500 7z" fill="#fff" />
            <circle cx="9.400" cy="12.600" r="1.500" fill="#5865f2" />
            <circle cx="14.600" cy="12.600" r="1.500" fill="#5865f2" />
          </svg>
        </div>
        <div className="flex h-full w-[50px] items-center justify-center">
          <svg width="22" height="20" viewBox="0 0 22 20">
            <path d="M0 1h9l1.500 2H22v15H0z" fill="#f6cf62" />
            <path d="M0 1h9v2.500H0z" fill="#dba01e" />
            <path d="M4 11h14v8h-4v-4H8v4H4z" fill="#3f93cf" />
          </svg>
        </div>
        <div className="flex h-full w-[48px] flex-col items-center justify-between bg-[#34334a]">
          <div className="h-[2px]" />
          <svg width="20" height="20" viewBox="0 0 20 20">
            <path d="M3 3h16v12l-2 2H1V5z" fill="#3fc650" />
            <text x="3.500" y="14" fontSize="11" fill="#fff" fontFamily="Liberation Sans, sans-serif">Qt</text>
            <path d="M7 18.500l1.500-4L17 7l2.500 2.500L11 17z" fill="#f2cf6a" stroke="#a3843a" strokeWidth=".6" />
          </svg>
          <div className="h-[2px] w-[48px] bg-[#b5b5c4]" />
        </div>
      </div>
      <div className="grow" />
      <div className="relative mr-[6px] flex flex-col items-center text-[12px] leading-[18px]">
        <span className="tracking-[-0.3px]">11:43 PM</span>
        <span className="tracking-[-0.450px]">2022-10-17</span>
      </div>
    </div>
  );
}

export default function App() {
  return (
    <div className="flex h-[1080px] w-[1920px] flex-col overflow-hidden bg-[#f0f0f0] font-['Noto_Sans',sans-serif] text-black select-none">
      <Defs />
      <div className="flex h-[23px] shrink-0 items-center bg-[#4c4a48] pl-[2px] text-white">
        <svg width="16" height="16" viewBox="0 0 16 16">
          <path d="M2 1h13v11l-2 2H1V3z" fill="#3fbf4c" />
          <text x="3" y="10" fontSize="9" fill="#fff" fontFamily="Liberation Sans, sans-serif">Qt</text>
          <rect x="3" y="12" width="12" height="3" fill="#e9c331" />
        </svg>
        <span className="grow pl-[5px] pt-[1px] text-[12px] tracking-[-0.4px]">Qt Designer</span>
        <svg width="102" height="12" viewBox="0 0 102 12" className="-mt-[2px] mr-[20px]">
          <path d="M1 6.500h10M91 1.500l10 9M101 1.500l-10 9" fill="none" stroke="#fff" />
          <path d="M46.500 3.500h7v7h-7zM48.500 3.500v-2h7v7h-2" fill="none" stroke="#fff" />
        </svg>
      </div>
      <div className="flex h-[21px] shrink-0 items-center bg-white text-[12px] tracking-[-0.3px]">
        <span className="w-[34px] pl-[8px]">File</span>
        <span className="w-[36px] pl-[8px]">Edit</span>
        <span className="w-[44px] pl-[8px]">Form</span>
        <span className="w-[41px] pl-[8px]">View</span>
        <span className="w-[58px] pl-[8px]">Settings</span>
        <span className="w-[60px] pl-[8px]">Window</span>
        <span className="pl-[8px]">Help</span>
      </div>
      <ToolBar />
      <div className="flex h-[942px] shrink-0">
        <WidgetBox />
        <Mdi />
        <div className="ml-[4px] flex w-[512px] flex-col pt-px">
          <ObjectInspector />
          <PropertyEditor />
          <ResourceBrowser />
        </div>
      </div>
      <div className="grow" />
      <TaskBar />
    </div>
  );
}
